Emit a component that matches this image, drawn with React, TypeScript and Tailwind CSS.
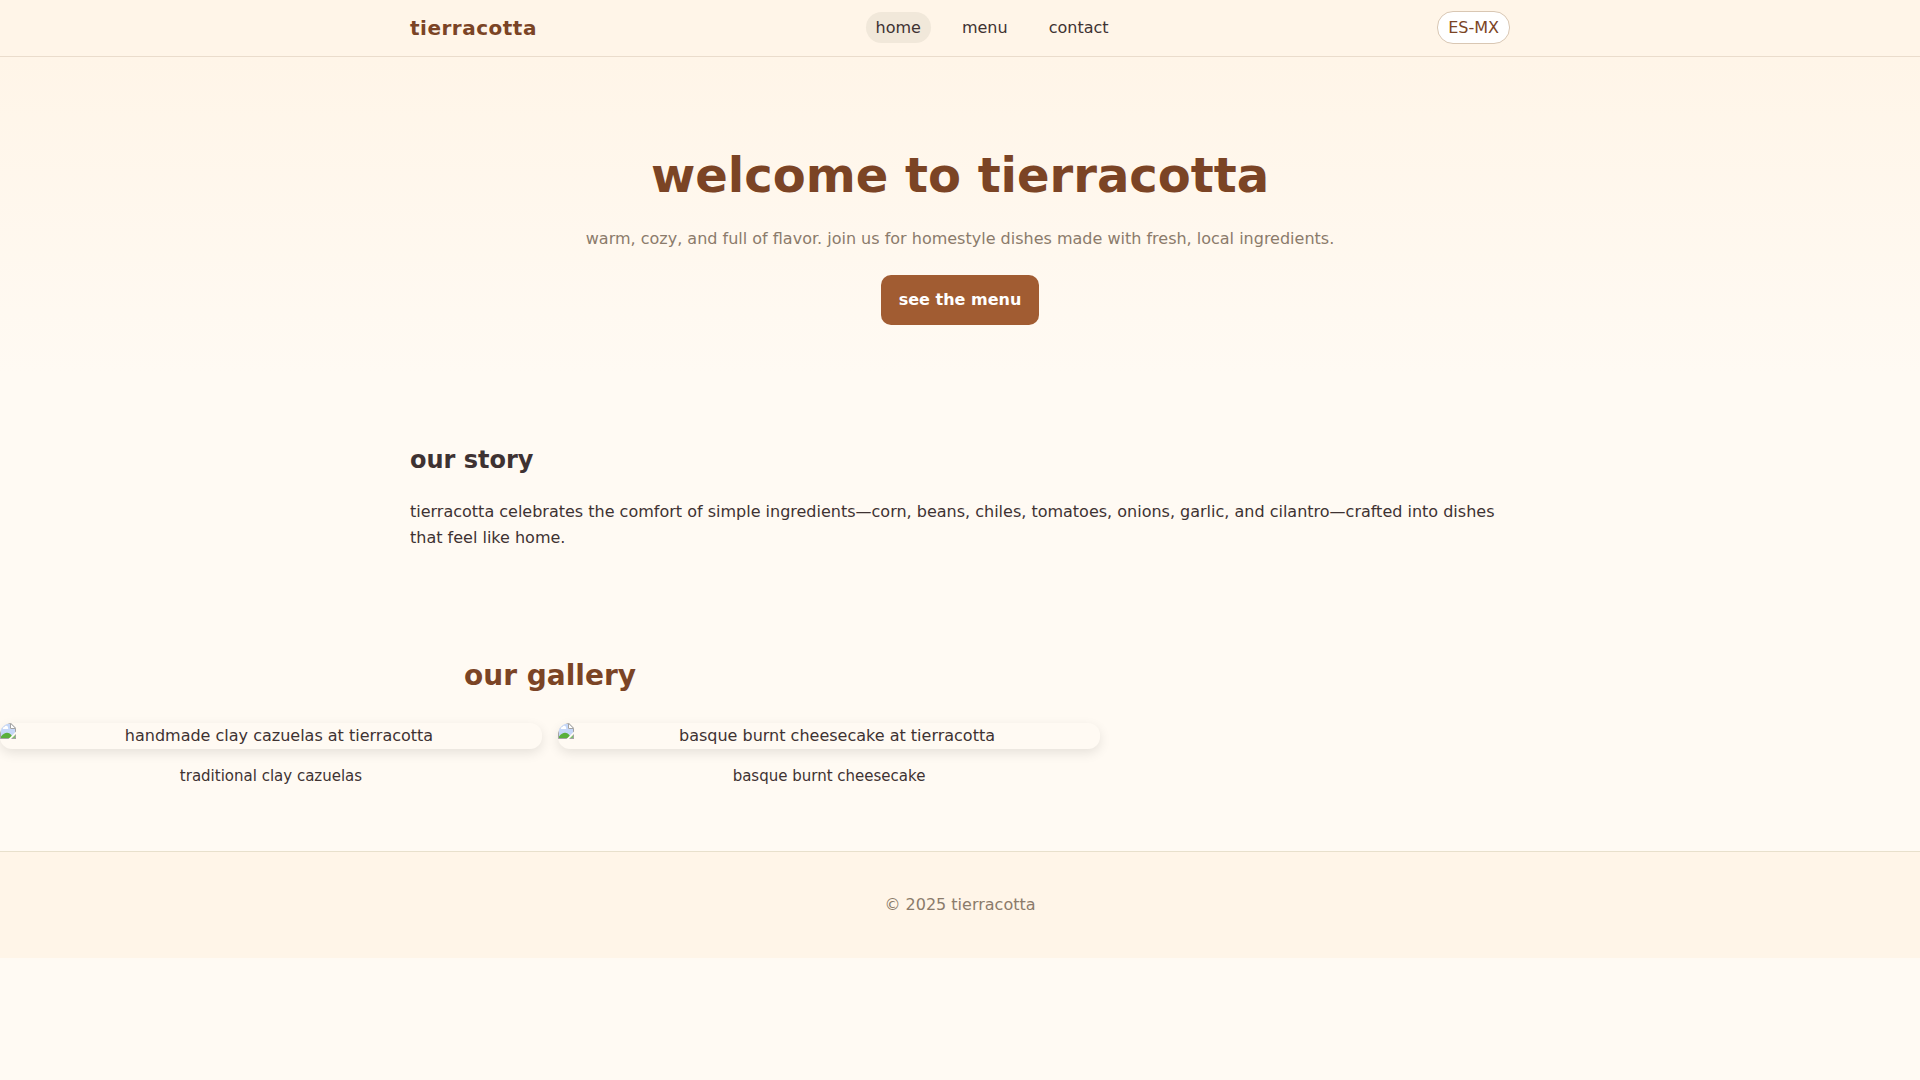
import React from 'react';

const navLinks = [
  { label: 'home', href: '#home', active: true },
  { label: 'menu', href: '#menu', active: false },
  { label: 'contact', href: '#contact', active: false },
];

const photos = [
  { alt: 'handmade clay cazuelas at tierracotta', caption: 'traditional clay cazuelas' },
  { alt: 'basque burnt cheesecake at tierracotta', caption: 'basque burnt cheesecake' },
];

function PhotoIcon() {
  return (
    <svg width="16" height="16" viewBox="0 0 16 16" className="shrink-0" aria-hidden="true">
      <path d="M0 0h11l5 5v11H0z" fill="#a3a3a3" />
      <path d="M1 1h9.500L15 5.500V15H1z" fill="#fff" />
      <path d="M1 1h9v5h5v9H1z" fill="#c5d7f8" />
      <path d="M3 6a1.500 1.500 0 0 1 1.500-2A1.800 1.800 0 0 1 8 4.500 1.200 1.200 0 0 1 8 6z" fill="#fff" />
      <path d="M1 15v-1.500C3 11 5 9.800 7 9.800s3.500 1.200 5 3.200l2 2z" fill="#5ab03c" />
      <path d="M15 11.500V15h-3.500z" fill="#7fbf6a" />
      <path d="M10.500 1v4.500H15" fill="#fff" stroke="#a3a3a3" />
      <path d="M16 8.500 8.500 16h2.500l5-5z" fill="#fffaf4" />
    </svg>
  );
}

export default function App() {
  return (
    <div className="min-h-screen bg-[#fffaf3] font-['DejaVu_Sans',sans-serif] text-base leading-[26px] text-[#3e3232]">
      <header className="border-b border-[#eadccc] bg-[#fff5e8]">
        <div className="mx-auto flex max-w-[1100px] items-center justify-between pt-[11px] pb-3">
          <a href="#home" className="text-xl leading-8 font-bold tracking-[0.5px] text-[#7b4425]">tierracotta</a>
          <nav className="flex gap-[21px] pl-2.5">
            {navLinks.map((link) => (
              <a
                key={link.label}
                href={link.href}
                className={`rounded-2xl px-2.5 py-1.5 leading-[19px] ${link.active ? 'bg-[#f1e8da]' : ''}`}
              >
                {link.label}
              </a>
            ))}
          </nav>
          <button type="button" className="rounded-2xl border border-[#d9c7b3] bg-white px-2.5 py-1.5 leading-[19px] text-[#7b4425]">
            ES-MX
          </button>
        </div>
      </header>

      <main>
        <section className="bg-linear-to-b from-[#fff5e8] to-[#fffaf3] pt-20 pb-12 text-center">
          <h1 className="mb-3 text-5xl leading-[77px] font-bold text-[#7b4425]">welcome to tierracotta</h1>
          <p className="mb-[23px] text-[#8b7b6b]">
            warm, cozy, and full of flavor. join us for homestyle dishes made with fresh, local ingredients.
          </p>
          <a href="#menu" className="inline-block rounded-[10px] bg-[#a15c32] px-[18px] py-3 font-bold text-white">
            see the menu
          </a>
        </section>

        <section className="mx-auto max-w-[1100px] pt-[68px] pb-[102px]">
          <h2 className="mb-5 text-2xl leading-[38px] font-bold">our story</h2>
          <p>
            tierracotta celebrates the comfort of simple ingredients—corn, beans, chiles, tomatoes, onions, garlic, and
            cilantro—crafted into dishes that feel like home.
          </p>
        </section>

        <section className="max-w-[1100px] pb-[62px] text-center">
          <h2 className="mb-[25px] text-[28px] leading-[45px] font-bold text-[#7b4425]">our gallery</h2>
          <div className="grid grid-cols-2 gap-4">
            {photos.map((photo) => (
              <figure key={photo.caption}>
                <div className="flex items-start overflow-hidden rounded-xl shadow-[0_4px_12px_rgba(0,0,0,0.1)]">
                  <PhotoIcon />
                  <span className="flex-1">{photo.alt}</span>
                </div>
                <figcaption className="mt-3.5 text-[15px]">{photo.caption}</figcaption>
              </figure>
            ))}
          </div>
        </section>
      </main>

      <footer className="border-t border-[#e8e0cc] bg-[#fff5e8] py-10 text-center text-[#8b7b6b]">
        © 2025 tierracotta
      </footer>
    </div>
  );
}
